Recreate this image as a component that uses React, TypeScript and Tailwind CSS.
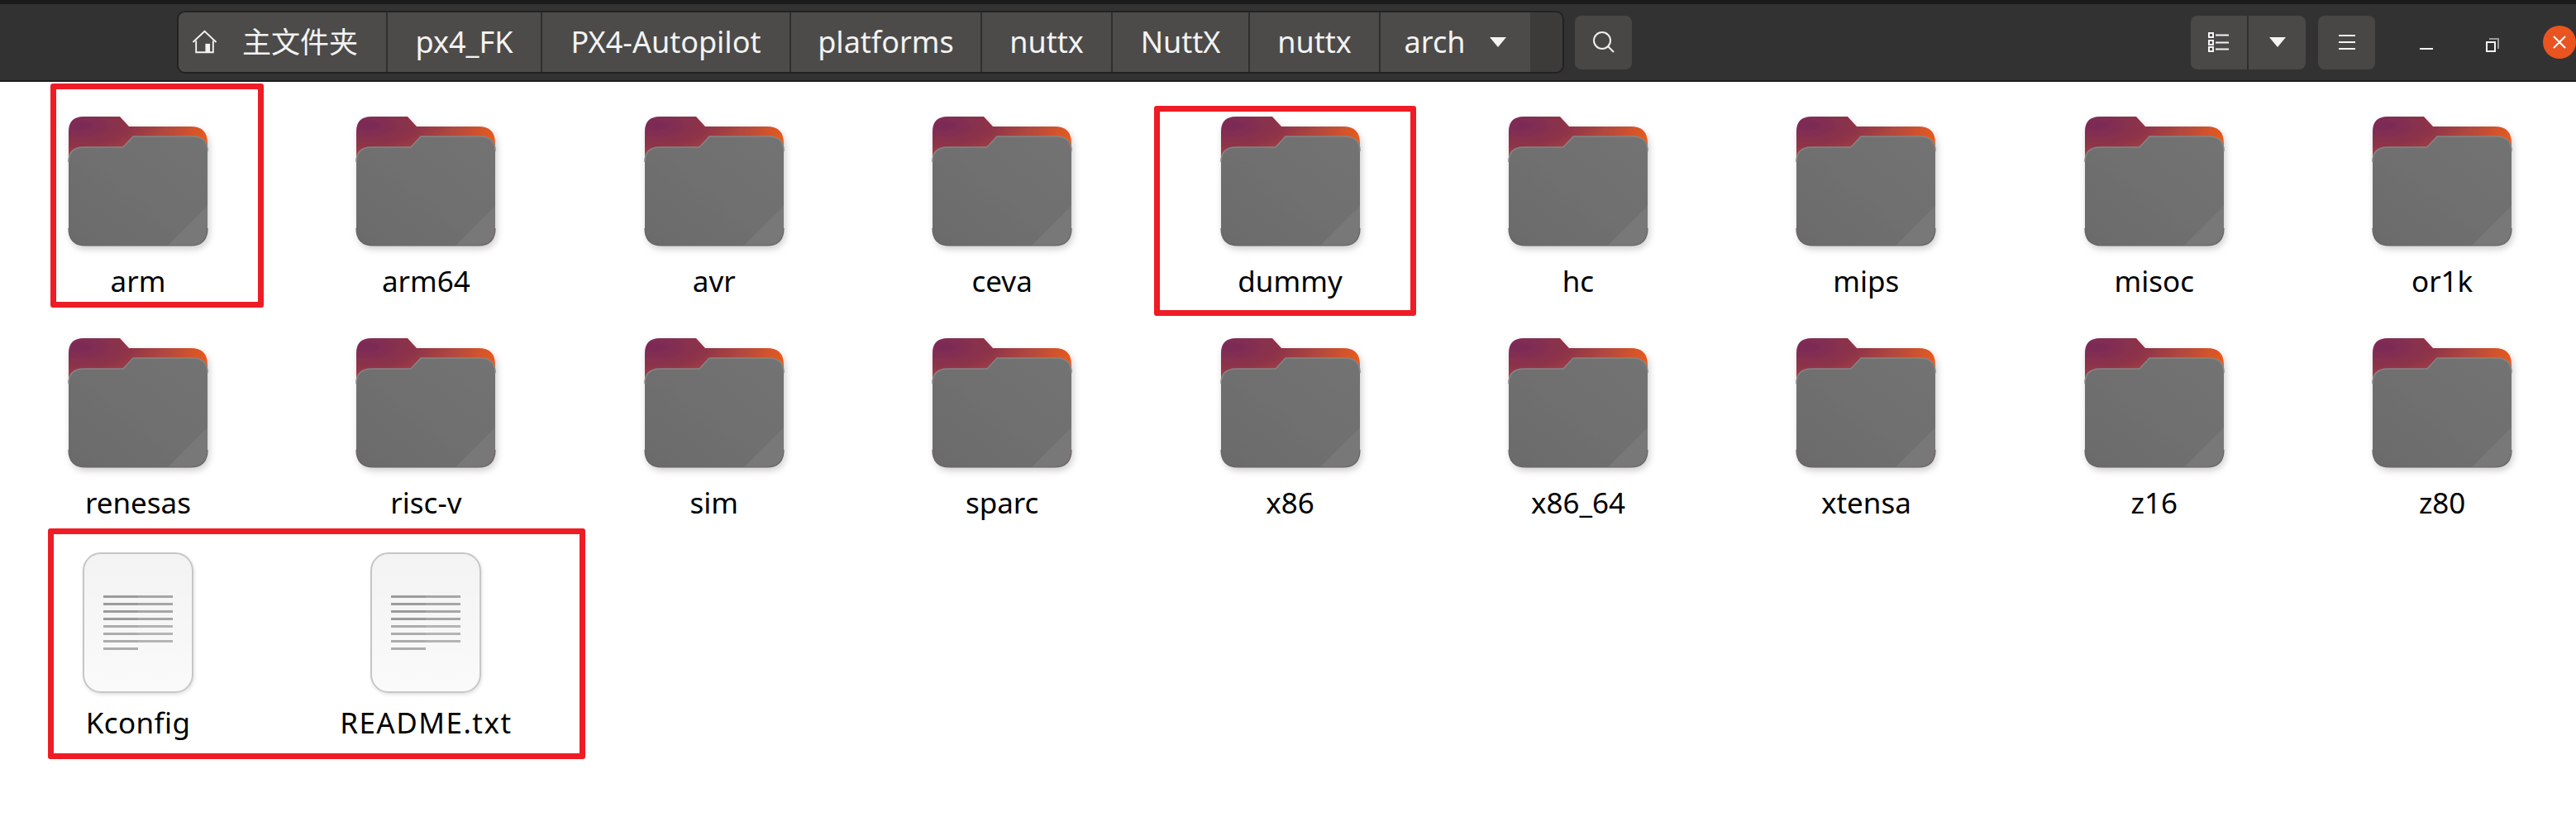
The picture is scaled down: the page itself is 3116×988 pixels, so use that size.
import React from "react";

const FONT = "font-['Noto_Sans','Noto_Sans_CJK_SC',sans-serif]";

function Folder() {
  return (
    <svg width="168" height="156" viewBox="0 0 168 156" className="block overflow-visible">
      <defs>
        <radialGradient id="fb" cx="8%" cy="15%" r="95%">
          <stop offset="0" stopColor="#7a2a58" />
          <stop offset="0.38" stopColor="#8f3448" />
          <stop offset="0.68" stopColor="#b34a3e" />
          <stop offset="1" stopColor="#ea5b1c" />
        </radialGradient>
        <linearGradient id="ff" x1="0" y1="1" x2="1" y2="0">
          <stop offset="0" stopColor="#6b6b6b" />
          <stop offset="1" stopColor="#737373" />
        </linearGradient>
        <filter id="fs" x="-15%" y="-15%" width="130%" height="130%">
          <feDropShadow dx="2" dy="4" stdDeviation="4" floodColor="#000" floodOpacity="0.2" />
        </filter>
      </defs>
      <g filter="url(#fs)">
        <path d="M0 18Q0 0 18 0L62 0L73 12L148 12Q168 12 168 32L168 70L0 70Z" fill="url(#fb)" />
        <path d="M0 55Q0 37 18 37L66 37L78 24L150 24Q168 24 168 42L168 135Q168 156 147 156L21 156Q0 156 0 135Z" fill="url(#ff)" />
      </g>
      <path d="M0 55Q0 37 18 37L66 37L78 24L150 24Q168 24 168 42" fill="none" stroke="#858585" strokeWidth="1.5" />
      <path d="M168 108L168 135Q168 156 147 156L120 156Z" fill="#787878" />
      <path d="M0 135Q0 156 21 156L147 156Q168 156 168 135" fill="none" stroke="#6a6260" strokeWidth="1.2" />
    </svg>
  );
}

function Doc() {
  const dark = [0, 1, 2, 3];
  return (
    <div className="relative h-[170px] w-[134px] rounded-[22px] border-2 border-[#c6c6c6] bg-gradient-to-b from-[#f3f3f3] to-[#fafafa] shadow-[1px_2px_4px_rgba(0,0,0,0.12)] pt-[50px] pl-[23px]">
      <div className="flex flex-col gap-[6px]">
        {[0, 1, 2, 3, 4, 5, 6, 7].map((i) => (
          <div key={i} className="flex h-[3px]">
            <div className={`h-[3px] w-[42px] ${dark.includes(i) ? "bg-[#9b9b9b]" : "bg-[#acacac]"}`} />
            {i < 7 && <div className={`h-[3px] w-[42px] ${dark.includes(i) ? "bg-[#a6a6a6]" : "bg-[#b4b4b4]"}`} />}
          </div>
        ))}
      </div>
    </div>
  );
}

function Item({ name, doc, track }: { name: string; doc?: boolean; track?: string }) {
  return (
    <div className="flex flex-col items-center">
      {doc ? <Doc /> : <Folder />}
      <div className={`${doc ? "mt-[14px]" : "mt-[21px]"} h-[44px] whitespace-nowrap text-[35px] leading-[44px] text-black ${track ?? ""} ${FONT}`}>
        {name}
      </div>
    </div>
  );
}

function Seg({ w, children, last }: { w: string; children: React.ReactNode; last?: boolean }) {
  return (
    <div className={`flex h-full items-center justify-center ${w} ${last ? "" : "border-r-2 border-[#2f2e2d]"} bg-[#4c4b49] text-[36px] text-[#f3f3f3] ${FONT}`}>
      {children}
    </div>
  );
}

function Caret() {
  return (
    <svg width="20" height="12" viewBox="0 0 20 12">
      <path d="M0 0H20L10 12Z" fill="#f4f4f4" />
    </svg>
  );
}

const rows = [
  ["arm", "arm64", "avr", "ceva", "dummy", "hc", "mips", "misoc", "or1k"],
  ["renesas", "risc-v", "sim", "sparc", "x86", "x86_64", "xtensa", "z16", "z80"],
];

export default function App() {
  return (
    <div className="relative h-[988px] w-[3116px] overflow-hidden bg-white">
      <header className="flex h-[99px] items-center border-t-[5px] border-b-2 border-t-[#1b1b1b] border-b-[#1e1e1e] bg-[#333232]">
        <nav className="ml-[214px] flex h-[76px] w-[1680px] items-stretch overflow-hidden rounded-[10px] border-2 border-[#232222] bg-[#3c3b3a]">
          <div className={`flex h-full w-[253px] items-center border-r-2 border-[#2f2e2d] bg-[#4c4b49] pl-[16px] text-[35px] text-[#f3f3f3] ${FONT}`}>
            <svg width="31" height="30" viewBox="0 0 32 32" className="mr-[30px]" fill="none" stroke="#f4f4f4" strokeWidth="2">
              <path d="M1 16L16 2L31 16" />
              <path d="M5 14V29H27V14" />
              <rect x="17" y="18" width="6" height="11" fill="#f4f4f4" stroke="none" />
            </svg>
            <span>主文件夹</span>
          </div>
          <Seg w="w-[187px]">px4_FK</Seg>
          <Seg w="w-[301px]">PX4-Autopilot</Seg>
          <Seg w="w-[231px]">platforms</Seg>
          <Seg w="w-[158px]">nuttx</Seg>
          <Seg w="w-[166px]">NuttX</Seg>
          <Seg w="w-[158px]">nuttx</Seg>
          <Seg w="w-[181px]" last>
            <span className="mr-[30px]">arch</span>
            <Caret />
          </Seg>
        </nav>
        <button className="ml-[13px] flex h-[65px] w-[69px] items-center justify-center rounded-[8px] bg-[#484745]">
          <svg width="30" height="30" viewBox="0 0 30 30" fill="none" stroke="#f0f0f0" strokeWidth="2">
            <circle cx="13" cy="13" r="10" />
            <path d="M20 20L27 27" />
          </svg>
        </button>
        <div className="ml-[676px] flex h-[65px] w-[139px] overflow-hidden rounded-[8px] bg-[#4a4947]">
          <div className="flex h-full w-[70px] items-center justify-center border-r-2 border-[#2f2e2d]">
            <svg width="26" height="24" viewBox="0 0 26 24" fill="none">
              <g stroke="#f4f4f4" strokeWidth="2">
                <rect x="1" y="1" width="5" height="5" />
                <rect x="1" y="10" width="5" height="5" />
                <rect x="1" y="18" width="5" height="5" />
                <path d="M9 3.5H25M9 12.5H25M9 20.5H25" />
              </g>
            </svg>
          </div>
          <div className="flex flex-1 items-center justify-center">
            <Caret />
          </div>
        </div>
        <button className="ml-[15px] flex h-[65px] w-[69px] items-center justify-center rounded-[8px] bg-[#484745]">
          <svg width="20" height="20" viewBox="0 0 20 20" stroke="#f4f4f4" strokeWidth="2">
            <path d="M0 2H20M0 10H20M0 18H20" />
          </svg>
        </button>
        <svg width="16" height="2" viewBox="0 0 16 2" className="ml-[54px] mt-[15px]">
          <rect width="16" height="2" fill="#f4f4f4" />
        </svg>
        <svg width="16" height="17" viewBox="0 0 16 17" className="ml-[64px] mt-[7px]" fill="none">
          <path d="M4 1H15V13" stroke="#9a9a9a" strokeWidth="2" />
          <rect x="1" y="5" width="10" height="11" stroke="#f4f4f4" strokeWidth="2" />
        </svg>
        <div className="ml-[53px] flex h-[40px] w-[40px] shrink-0 items-center justify-center rounded-full bg-[#e95420]">
          <svg width="16" height="16" viewBox="0 0 16 16" stroke="#fff" strokeWidth="2">
            <path d="M1 1L15 15M15 1L1 15" />
          </svg>
        </div>
      </header>

      <main className="grid grid-cols-[repeat(9,320px)] grid-rows-[268px_259px_auto] gap-x-[28.4px] pt-[42px] pl-[7px]">
        {rows.flat().map((n) => (
          <Item key={n} name={n} />
        ))}
        <Item name="Kconfig" doc track="tracking-[0.4px]" />
        <Item name="README.txt" doc track="tracking-[1.5px]" />
      </main>

      <div className="absolute top-[101px] left-[61px] h-[271px] w-[258px] rounded-[3px] border-[7px] border-[#ee1c25]" />
      <div className="absolute top-[128px] left-[1396px] h-[254px] w-[317px] rounded-[3px] border-[7px] border-[#ee1c25]" />
      <div className="absolute top-[639px] left-[58px] h-[279px] w-[650px] rounded-[3px] border-[7px] border-[#ee1c25]" />
    </div>
  );
}
